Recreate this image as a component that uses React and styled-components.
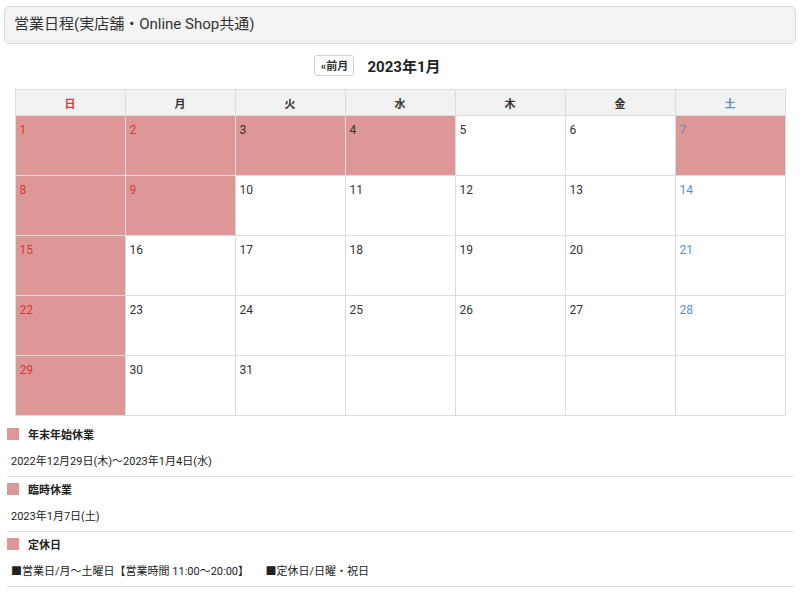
import React from "react";
import styled, { createGlobalStyle } from "styled-components";

const Global = createGlobalStyle`
  html, body { margin: 0; padding: 0; background: #fff; }
  body {
    font-family: Roboto, "Noto Sans CJK JP", "Noto Sans", sans-serif;
    color: #333;
  }
`;

const PINK = "#de9797";
const RED = "#d23a3a";
const BLUE = "#5a90c4";

const Page = styled.div`
  width: 792px;
  padding: 6px 4px 0;
`;

const Header = styled.div`
  height: 36px;
  border: 1px solid #d9d9d9;
  border-radius: 5px;
  background: #f4f4f4;
  padding: 0 9px;
  font-size: 15px;
  line-height: 35px;
  color: #333;
`;

const Nav = styled.div`
  display: grid;
  grid-template-columns: 1fr auto 1fr;
  align-items: center;
  margin-top: 10px;
  padding-left: 8px;
  height: 22px;
`;

const PrevButton = styled.button`
  justify-self: end;
  margin-right: 13px;
  width: 40px;
  height: 21px;
  padding: 0;
  border: 1px solid #cfcfcf;
  border-radius: 3px;
  background: #fff;
  font-family: inherit;
  font-size: 11px;
  font-weight: 700;
  color: #333;
  cursor: pointer;
`;

const MonthTitle = styled.div`
  font-size: 15px;
  font-weight: 700;
  color: #222;
`;

const Table = styled.table`
  width: 771px;
  margin: 13px auto 0;
  border-collapse: collapse;
  table-layout: fixed;
`;

const Th = styled.th`
  height: 25px;
  border: 1px solid #dcdcdc;
  background: #f2f2f2;
  font-size: 11px;
  font-weight: 700;
  color: ${(p) => p.$color || "#333"};
  padding: 0;
`;

const Td = styled.td`
  height: 49px;
  border: 1px solid #dcdcdc;
  background: ${(p) => (p.$off ? PINK : "#fff")};
  vertical-align: top;
  padding: 5px 4px;
  font-size: 12px;
  line-height: 18px;
  color: ${(p) => p.$color || "#333"};
`;

const Legend = styled.div`
  margin: 6px 2px 0 3px;
`;

const LegendItem = styled.div`
  padding: 5px 0 6px;
  border-bottom: 1px solid #dcdcdc;
`;

const LegendHead = styled.div`
  display: flex;
  align-items: center;
  gap: 9px;
  height: 13px;
  font-size: 11px;
  font-weight: 700;
  color: #222;
`;

const Swatch = styled.span`
  width: 12px;
  height: 12px;
  background: ${PINK};
  flex: none;
`;

const LegendText = styled.div`
  margin-top: 14px;
  padding-left: 4px;
  font-size: 11px;
  line-height: 16px;
  color: #222;
  white-space: pre;
`;

const offDays = new Set([1, 2, 3, 4, 7, 8, 9, 15, 22, 29]);
const redDays = new Set([1, 2, 8, 9, 15, 22, 29]);
const weekdays = ["日", "月", "火", "水", "木", "金", "土"];

function dayColor(d, col) {
  if (redDays.has(d) || col === 0) return RED;
  if (col === 6) return BLUE;
  return "#333";
}

export default function App() {
  const weeks = [];
  let d = 1;
  for (let w = 0; w < 5; w++) {
    const row = [];
    for (let c = 0; c < 7; c++) {
      row.push(d <= 31 ? d : null);
      d++;
    }
    weeks.push(row);
  }
  return (
    <>
      <Global />
      <Page>
        <Header>営業日程(実店舗・Online Shop共通)</Header>
        <Nav>
          <PrevButton>«前月</PrevButton>
          <MonthTitle>2023年1月</MonthTitle>
          <span />
        </Nav>
        <Table>
          <thead>
            <tr>
              {weekdays.map((w, i) => (
                <Th key={w} $color={i === 0 ? RED : i === 6 ? BLUE : undefined}>
                  {w}
                </Th>
              ))}
            </tr>
          </thead>
          <tbody>
            {weeks.map((row, wi) => (
              <tr key={wi}>
                {row.map((day, ci) => (
                  <Td
                    key={ci}
                    $off={day && offDays.has(day)}
                    $color={day ? dayColor(day, ci) : undefined}
                  >
                    {day || ""}
                  </Td>
                ))}
              </tr>
            ))}
          </tbody>
        </Table>
        <Legend>
          <LegendItem>
            <LegendHead>
              <Swatch />
              年末年始休業
            </LegendHead>
            <LegendText>2022年12月29日(木)～2023年1月4日(水)</LegendText>
          </LegendItem>
          <LegendItem>
            <LegendHead>
              <Swatch />
              臨時休業
            </LegendHead>
            <LegendText>2023年1月7日(土)</LegendText>
          </LegendItem>
          <LegendItem>
            <LegendHead>
              <Swatch />
              定休日
            </LegendHead>
            <LegendText>{"■営業日/月～土曜日【営業時間 11:00～20:00】　　■定休日/日曜・祝日"}</LegendText>
          </LegendItem>
        </Legend>
      </Page>
    </>
  );
}
